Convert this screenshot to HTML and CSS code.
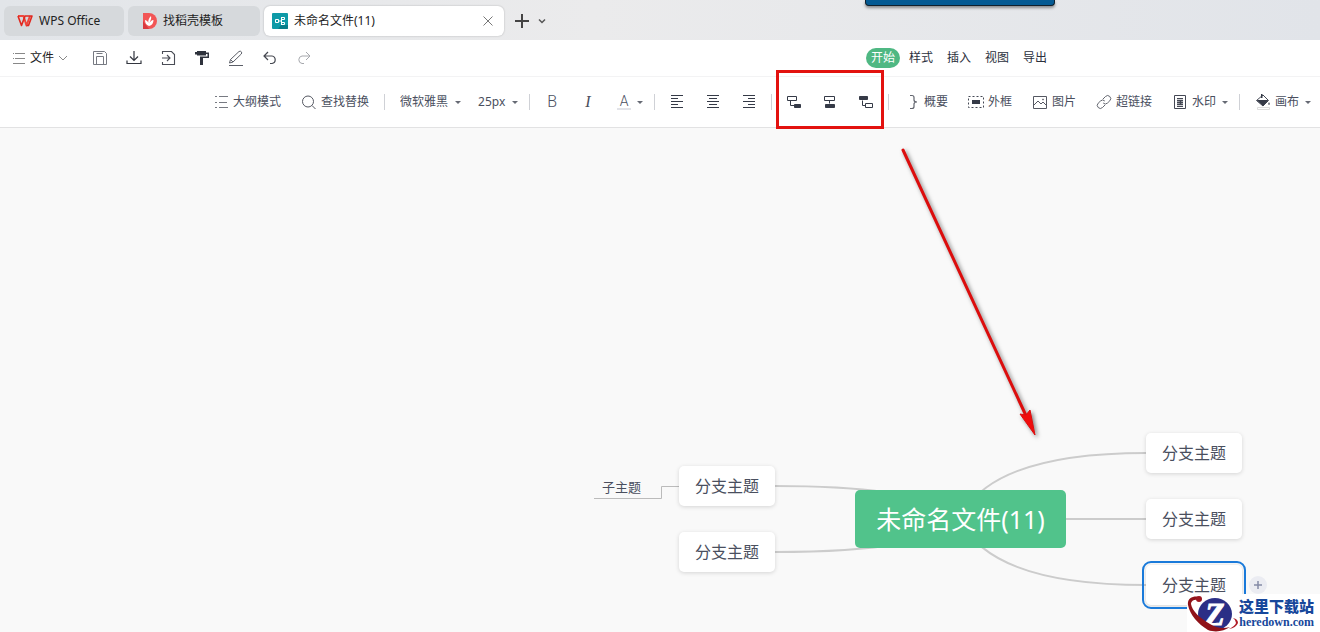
FILE: index.html
```html
<!DOCTYPE html>
<html lang="zh-CN">
<head>
  <meta charset="UTF-8" />
  <meta name="viewport" content="width=device-width, initial-scale=1.0"/>
  <title>未命名文件(11)</title>
  <link rel="stylesheet" href="styles.css">
</head>
<body>
  <header class="titlebar">
    <button class="tab">
      <svg class="icon" viewBox="0 0 16 16" fill="none" stroke-linejoin="round"><path d="M1 3h5.500l3 9.500L13 3" stroke="#f0463c" stroke-width="2"/><path d="M1 3l3.500 9.500L8 3h7l-3.500 9.500H9.500" stroke="#e0281f" stroke-width="1.600"/></svg>
      <span>WPS Office</span>
    </button>
    <button class="tab tab-docer">
      <svg class="icon" viewBox="0 0 16 16"><path d="M2 0h6a8 8 0 0 1 0 16H2z" fill="#f25555"/><path d="M2 8l6 8H2z" fill="#d93a3f"/><path d="M8 13C5 12 4 10 4 7c2 .6 3 1.800 3.300 3C7 7 8 5 10 3c.4 2 .2 3.500-1 5.500L8 11c1-2.500 2.500-3.800 4.500-4 0 3-1.500 5.400-4.500 6z" fill="#fff"/></svg>
      <span>找稻壳模板</span>
    </button>
    <div class="tab active">
      <svg class="icon" viewBox="0 0 16 16"><rect width="16" height="16" rx="1" fill="#0e9aa7"/><path d="M9 12h7v3a1 1 0 0 1-1 1H6z" fill="#087c88"/><path d="M3.500 6.500h3v3h-3zM6.500 8h3M9 4.500h3.500v2H10M9 11.500h3.500v-2H10M9.500 4.500v7" fill="none" stroke="#fff"/></svg>
      <span class="tab-name">未命名文件(11)</span>
      <button class="close" aria-label="关闭">
        <svg viewBox="0 0 12 12" fill="none" stroke="#777"><path d="M1.500 1.500l9 9M10.500 1.500l-9 9"/></svg>
      </button>
    </div>
    <button class="plain" aria-label="新建">
      <svg class="icon" viewBox="0 0 16 16" fill="none" stroke="#444" stroke-width="2"><path d="M1 8h14M8 1v14"/></svg>
    </button>
    <button class="more" aria-label="更多标签">
      <svg width="8" height="8" viewBox="0 0 8 8" fill="none" stroke="#555" stroke-width="1.500"><path d="M1 2.500l3 3 3-3"/></svg>
    </button>
    <div class="popup-edge"></div>
  </header>

  <div class="menubar">
    <div class="quick">
      <button class="file-btn">
        <svg width="14" height="14" viewBox="0 0 14 14" fill="none" stroke="#888"><path d="M1 2.500h1M3 2.500h10M1 7.500h1M3 7.500h10M1 12.500h12"/></svg>
        <span>文件</span>
        <svg width="10" height="8" viewBox="0 0 10 8" fill="none" stroke="#888"><path d="M1 2l4 4 4-4"/></svg>
      </button>
      <div class="quick-icons">
        <button aria-label="保存"><svg class="icon" viewBox="0 0 16 16" fill="none" stroke="#777a82"><path d="M1.500 1.500h11l2 2v11h-13zM4.500 14.500v-8h7v8M4.500 3.500h6"/></svg></button>
        <button aria-label="下载"><svg class="icon" viewBox="0 0 16 16" fill="none" stroke="#33363f" stroke-width="1.200"><path d="M8 1v9.500M4 6.500l4 4 4-4M1 10.500v3h14v-3"/></svg></button>
        <button aria-label="另存为"><svg class="icon" viewBox="0 0 16 16" fill="none" stroke="#4a4d56" stroke-width="1.100"><path d="M2.500 4V1.500h9l3 3v10h-12V12M2 8h8M7 5l3 3-3 3"/></svg></button>
        <button aria-label="格式刷"><svg class="icon" viewBox="0 0 16 16" fill="#2e323c"><path d="M3 1h9v1.500h3V8H9v7H6V6.500h7.500V4H12v1.500H3V4.500H1V2h2z"/></svg></button>
        <button aria-label="画笔"><svg class="icon" viewBox="0 0 16 16" fill="none" stroke="#5c5f68"><path d="M1.500 13l1-3.500 8.500-8q1.500-.8 2.300.3t0 2.200l-8.300 8zM2.500 9.500L5 12M1 15.500h14"/></svg></button>
        <button aria-label="撤销"><svg class="icon" viewBox="0 0 16 16" fill="none" stroke="#44474f" stroke-width="1.200"><path d="M6 2L2 6l4 4M2 6h8a3.800 3.800 0 0 1 0 7.500H8"/></svg></button>
        <button aria-label="重做"><svg class="icon" viewBox="0 0 16 16" fill="none" stroke="#a6a8ad"><path d="M10 2l4 4-4 4M14 6H6a3.800 3.800 0 0 0 0 7.500h2"/></svg></button>
      </div>
    </div>
    <nav class="menu-tabs">
      <a href="#" class="current">开始</a>
      <a href="#">样式</a>
      <a href="#">插入</a>
      <a href="#">视图</a>
      <a href="#">导出</a>
    </nav>
  </div>

  <div class="toolbar">
    <div class="group labelled">
      <button><svg class="icon" viewBox="0 0 16 16" fill="none" stroke="#777a82"><path d="M2 2.500h2M6 2.500h9M2 8.500h2M6 8.500h8M2 13.500h2M6 13.500h9"/></svg>大纲模式</button>
      <button><svg class="icon" viewBox="0 0 16 16" fill="none" stroke="#555862"><circle cx="7" cy="7.500" r="5.500"/><path d="M11 11.500l3.500 3.500"/></svg>查找替换</button>
    </div>
    <span class="sep"></span>
    <div class="group dropdowns">
      <label class="pick"><select aria-label="字体"><option>微软雅黑</option></select></label>
      <label class="pick"><select aria-label="字号"><option>25px</option></select></label>
    </div>
    <span class="sep"></span>
    <div class="group icons has-caret">
      <button class="letter">B</button>
      <button class="letter italic">I</button>
      <button class="letter pick"><span class="font-color">A</span></button>
    </div>
    <span class="sep"></span>
    <div class="group icons">
      <button aria-label="左对齐"><svg viewBox="0 0 14 14"><path d="M1 .5h12M1 3.500h7M1 6.500h12M1 9.500h7M1 12.500h12"/></svg></button>
      <button aria-label="居中"><svg viewBox="0 0 14 14"><path d="M1 .5h12M3 3.500h8M1 6.500h12M3 9.500h8M1 12.500h12"/></svg></button>
      <button aria-label="右对齐"><svg viewBox="0 0 14 14"><path d="M1 .5h12M6 3.500h7M1 6.500h12M6 9.500h7M1 12.500h12"/></svg></button>
    </div>
    <span class="sep"></span>
    <div class="group icons insert">
      <button aria-label="插入子主题"><svg viewBox="0 0 14 14"><path d="M.5 1.500h9v4h-9zM3.500 5.500v5h4"/><path class="solid" d="M7.500 9.500h6v3h-6z"/></svg></button>
      <button aria-label="插入同级主题"><svg viewBox="0 0 14 14"><path d="M1.500 1.500h10v4h-10zM6.500 5.500v3"/><path class="solid" d="M2.500 9.500h9v3h-9z"/></svg></button>
      <button aria-label="插入父主题"><svg viewBox="0 0 14 14"><path class="solid" d="M.5 1.500h8v3h-8z"/><path d="M3.500 5.500v5h3M6.500 8.500h7v4h-7z"/></svg></button>
      <span class="highlight"></span>
    </div>
    <span class="sep"></span>
    <div class="group labelled has-caret">
      <button><svg class="icon" viewBox="0 0 16 16" fill="none" stroke="#62656e" stroke-width="1.200"><path d="M6 1.500h2q2 0 2 2V6q0 2 3 2-3 0-3 2v2.500q0 2-2 2H6"/></svg>概要</button>
      <button><svg class="icon" viewBox="0 0 16 16"><path d="M.5 2.500h15v11H.5z" fill="none" stroke="#444854" stroke-dasharray="2 2"/><path d="M4 6h8v4H4z" fill="#353a47"/></svg>外框</button>
      <button><svg class="icon" viewBox="0 0 16 16" fill="none" stroke="#555862"><path d="M1.500 2.500h13v12h-13zM2 11l4-4 3 3 2-2 4 4"/><circle cx="11" cy="5.500" r=".5"/></svg>图片</button>
      <button><svg class="icon" viewBox="0 0 16 16" fill="none" stroke="#62656e"><path d="M7 5l2.500-2.500a3 3 0 0 1 4.300 4.300L11.500 9a3 3 0 0 1-4.300 0M9 11l-2.500 2.500a3 3 0 0 1-4.300-4.300L4.500 7a3 3 0 0 1 4.300 0"/></svg>超链接</button>
      <button class="pick"><svg class="icon" viewBox="0 0 16 16" fill="none" stroke="#444854"><path d="M2.500 1.500h11v13h-11zM5 4.500h6M5 12.500h6" /><path d="M5 6.500h6M5 8.500h6M5 10.500h6M8.500 6v4" stroke-width="1.500"/></svg>水印</button>
    </div>
    <span class="sep"></span>
    <div class="group labelled">
      <button class="pick"><svg class="icon" viewBox="0 0 16 16"><path d="M1.500 6.500L8 1l5.500 5.500L8 12z" fill="none" stroke="#444854"/><path d="M1.500 6h12L8 12zM6 0h1.500v4H6zM14 8l1 2.500h-2z" fill="#353a47"/><path d="M2.500 13.500h12v2h-12z" fill="#fff" stroke="#ddd"/></svg>画布</button>
    </div>
  </div>

  <main class="canvas">
    <svg class="links">
      <path d="M960 391Q990 325 1146 325M960 391H1146M960 391Q990 457 1146 457M960 391Q930 358 775 358M960 391Q930 424 775 424"/>
      <path class="thin" d="M594 370.500H661.500V358.500H679"/>
    </svg>
    <div class="node root">未命名文件(11)</div>
    <div class="node sub">子主题</div>
    <div class="node branch left-1">分支主题</div>
    <div class="node branch left-2">分支主题</div>
    <div class="node branch right-1">分支主题</div>
    <div class="node branch right-2">分支主题</div>
    <div class="node branch right-3 selected">分支主题</div>
    <button class="add" aria-label="添加主题"><svg viewBox="0 0 18 18" fill="none" stroke="#858ba6" stroke-width="1.500"><path d="M5 9h8M9 5v8"/></svg></button>

    <svg class="arrow" width="150" height="300" viewBox="0 0 150 300">
      <path d="M8 10L133 280" fill="none" stroke="#dc0d0d" stroke-width="3" stroke-linecap="round"/>
      <path d="M140 295L125 274l6 1 4-5z" fill="#f00c0c" stroke="#dc0d0d" stroke-linejoin="round"/>
    </svg>
  </main>

  <div class="watermark">
    <svg width="52" height="38" viewBox="0 0 52 38">
      <ellipse cx="28" cy="20" rx="17" ry="16" fill="#2b2f86"/>
      <text x="18" y="31" class="logo-z">Z</text>
      <path d="M14 3C6 1 0 4 1 11c2 10 10 19 20 25 8 3 16 1 22-3-7 2-14 1-20-3C13 24 5 17 4 10c0-4 4-5 10-4z" fill="#8f1219"/>
      <circle cx="12" cy="5" r="3" fill="#9c1620"/>
      <path d="M46 24q5 1 5 5-2 5-9 6 6-3 7-6 0-3-3-5z" fill="#b01c26"/>
    </svg>
    <div class="site">
      <strong>这里下载站</strong>
      <span>heredown.com</span>
    </div>
  </div>
</body>
</html>
```
FILE: styles.css
```css
* {
  box-sizing: border-box;
  margin: 0;
  padding: 0;
}

body {
  position: relative;
  min-height: 100vh;
  display: flex;
  flex-direction: column;
  overflow: hidden;
  background-color: #fff;
  color: #4a4f5e;
  font-family: "Noto Sans", "Noto Sans CJK SC", sans-serif;
  font-size: 12px;
  line-height: 16px;
}

button, select {
  font: inherit;
  color: inherit;
  background: none;
  border: none;
  cursor: pointer;
  white-space: nowrap;
}

button {
  display: flex;
  align-items: center;
}

svg {
  display: block;
  flex-shrink: 0;
}

.icon {
  width: 16px;
  height: 16px;
}

/* window tabs */
.titlebar {
  position: relative;
  height: 40px;
  padding: 1px 4px 0;
  display: flex;
  align-items: center;
  gap: 4px;
  background: linear-gradient(90deg, #e2e5e9, #ebebec 45%, #e1e4e9);
}

.tab {
  display: flex;
  align-items: center;
  gap: 6px;
  width: 120px;
  height: 30px;
  padding: 0 13px;
  border-radius: 6px;
  background-color: #d6d9dc;
  color: #222;
}

.tab-docer {
  width: 132px;
}

.tab.active {
  width: 240px;
  padding: 0 9px 0 8px;
  background-color: #fff;
  box-shadow: 0 0 2px rgba(0, 0, 0, 0.25);
}

.tab-name {
  flex: 1;
}

.close svg {
  width: 14px;
  height: 12px;
}

.plain {
  padding: 0 4px 0 6px;
}

.popup-edge {
  position: absolute;
  top: 0;
  left: 865px;
  width: 190px;
  height: 6px;
  background-color: #045a93;
  border: 1px solid #10202c;
  border-top: none;
  border-radius: 0 0 4px 4px;
  box-shadow: 0 2px 3px rgba(0, 0, 0, 0.4);
}

/* menu row */
.menubar {
  height: 37px;
  display: grid;
  grid-template-columns: 866px 1fr;
  align-items: center;
  border-bottom: 1px solid #f3f3f4;
}

.quick, .quick-icons, .menu-tabs {
  display: flex;
  align-items: center;
}

.quick {
  padding-left: 12px;
  gap: 24px;
}

.quick-icons {
  gap: 18px;
}

.file-btn {
  gap: 4px;
  color: #222;
}

.menu-tabs {
  gap: 4px;
}

.menu-tabs a {
  padding: 2px 5px;
  border-radius: 10px;
  color: #2b303c;
  text-decoration: none;
  white-space: nowrap;
}

.menu-tabs .current {
  background-color: #4fb883;
  color: #fff;
}

/* toolbar */
.toolbar {
  height: 51px;
  padding-left: 198px;
  display: flex;
  align-items: center;
  border-bottom: 1px solid #e2e2e3;
}

.group {
  position: relative;
  height: 50px;
  padding: 0 15px;
  display: flex;
  flex-shrink: 0;
  align-items: center;
  gap: 20px;
}

.group.icons {
  gap: 22px;
}

.group.dropdowns {
  gap: 17px;
}

.group.dropdowns, .group.has-caret {
  padding-right: 11px;
}

.labelled button {
  gap: 4px;
}

.sep {
  flex-shrink: 0;
  width: 1px;
  height: 16px;
  background-color: #cfd1d6;
}

.pick {
  display: flex;
  align-items: center;
}

.pick::after {
  content: "";
  margin-left: 6px;
  border: 3px solid transparent;
  border-top-color: #666a74;
  border-bottom: none;
}

.labelled .pick::after {
  margin-left: 2px;
}

.pick select {
  appearance: none;
}

.icons svg {
  width: 14px;
  height: 14px;
  fill: none;
  stroke: #353a47;
}

.icons .solid {
  fill: #353a47;
}

.letter {
  min-width: 14px;
  justify-content: center;
  font-family: Roboto, sans-serif;
  font-size: 16px;
  font-weight: 300;
}

.italic {
  font-family: "Liberation Serif", serif;
  font-style: italic;
}

.font-color {
  width: 14px;
  border-bottom: 2px solid #e2e3e8;
  font-size: 14px;
  line-height: 14px;
}

.highlight {
  position: absolute;
  z-index: 2;
  top: -7px;
  bottom: -2px;
  left: 4px;
  right: 4px;
  border: 3px solid #e3120f;
  pointer-events: none;
}

/* mind map */
.canvas {
  position: relative;
  flex: 1;
  overflow: hidden;
  background-color: #f9f9f9;
}

.links {
  position: absolute;
  width: 100%;
  height: 100%;
  fill: none;
  stroke: #ccc;
  stroke-width: 2;
}

.links .thin {
  stroke: #bbb;
  stroke-width: 1;
}

.node {
  position: absolute;
  display: flex;
  align-items: center;
  justify-content: center;
  white-space: nowrap;
}

.root {
  top: 362px;
  left: 855px;
  width: 211px;
  height: 58px;
  border-radius: 5px;
  background-color: #51c38b;
  color: #fff;
  font-size: 25px;
  line-height: 32px;
}

.sub {
  top: 348px;
  left: 602px;
  height: 22px;
  font-size: 13px;
}

.branch {
  width: 96px;
  height: 40px;
  border-radius: 5px;
  background-color: #fff;
  box-shadow: 0 1px 4px rgba(0, 0, 0, 0.15);
  font-size: 16px;
}

.left-1 {
  top: 338px;
  left: 679px;
}

.left-2 {
  top: 404px;
  left: 679px;
}

.right-1 {
  top: 305px;
  left: 1146px;
}

.right-2 {
  top: 371px;
  left: 1146px;
}

.right-3 {
  top: 437px;
  left: 1146px;
}

.selected {
  outline: 2px solid #1a7ada;
  outline-offset: 2px;
}

.add {
  position: absolute;
  top: 448px;
  left: 1249px;
  width: 18px;
  height: 18px;
  border-radius: 50%;
  background-color: #ebecf2;
}

.arrow {
  position: absolute;
  top: 12px;
  left: 895px;
  filter: drop-shadow(2px 2px 2px rgba(0, 0, 0, 0.5));
}

.watermark {
  position: absolute;
  right: 0;
  bottom: 0;
  width: 133px;
  height: 38px;
  display: flex;
  background-color: #fff;
  color: #17479b;
}

.logo-z {
  fill: #fff;
  stroke: #fff;
  font: italic bold 32px "Liberation Serif", serif;
}

.site {
  display: flex;
  flex-direction: column;
  align-items: flex-end;
  padding-top: 4px;
  font-family: "Liberation Serif", "Noto Sans CJK SC", serif;
  font-weight: bold;
  white-space: nowrap;
}

.site strong {
  font-size: 15px;
  line-height: 18px;
}

.site span {
  font-size: 12px;
  line-height: 12px;
}
```
